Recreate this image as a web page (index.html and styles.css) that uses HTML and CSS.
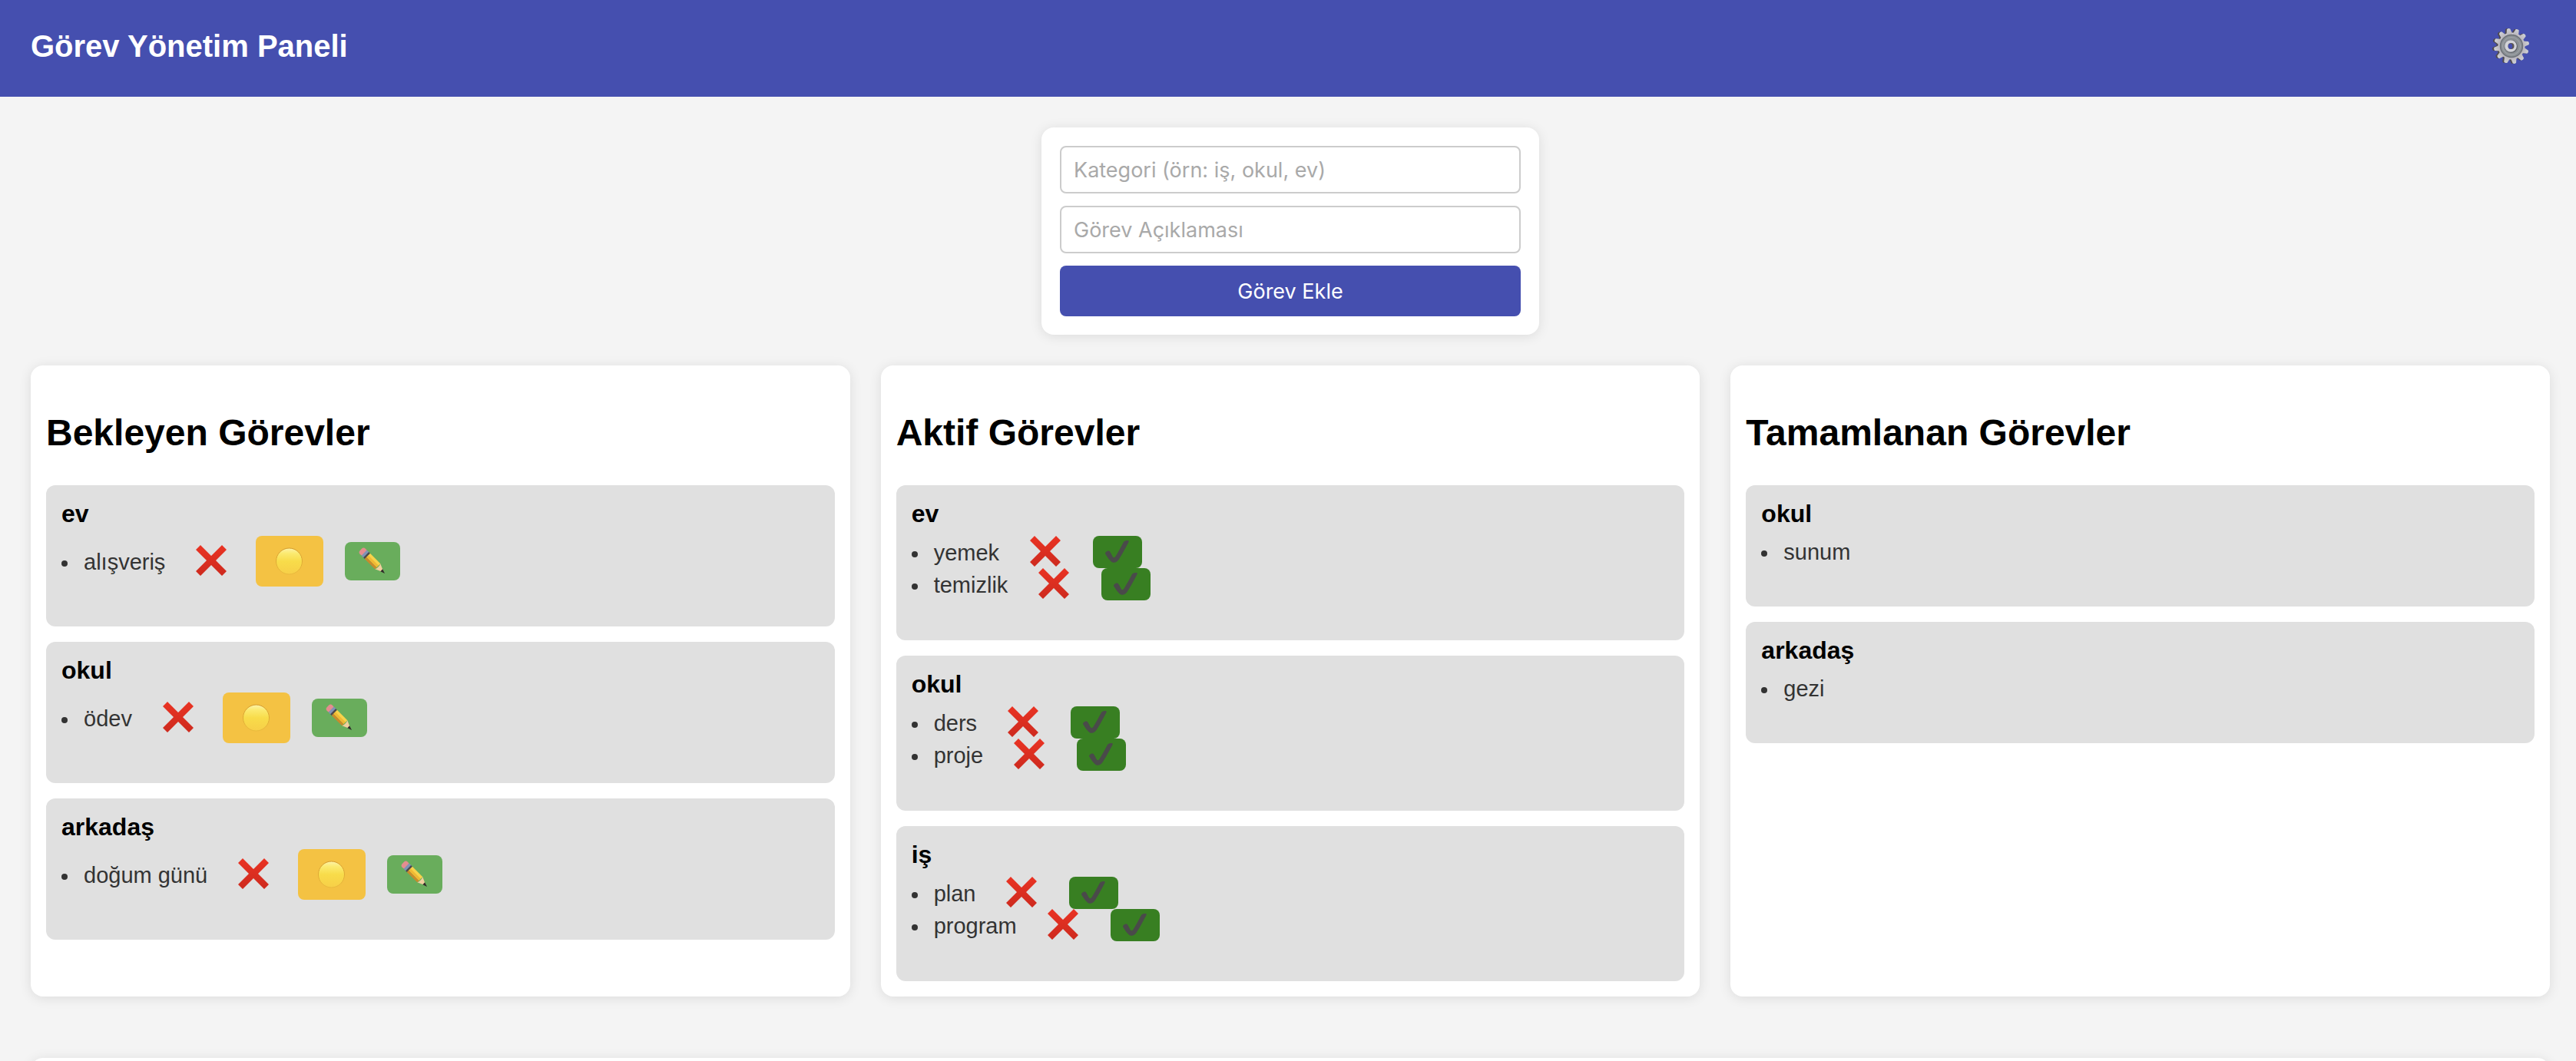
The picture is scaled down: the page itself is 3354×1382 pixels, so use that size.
FILE: index.html
```html
<!DOCTYPE html>
<html lang="tr">
<head>
<meta charset="utf-8">
<title>Görev Yönetim Paneli</title>
<link rel="stylesheet" href="styles.css">
</head>
<body>
<svg class="defs" aria-hidden="true">
  <defs>
    <linearGradient id="red" x1="0" y1="0" x2="0" y2="1"><stop offset="0" stop-color="#ea3323"/><stop offset="1" stop-color="#cd2a1e"/></linearGradient>
    <linearGradient id="sun" x1="0" y1="0" x2="0" y2="1"><stop offset="0" stop-color="#fdf3a8"/><stop offset=".2" stop-color="#fbea70"/><stop offset=".5" stop-color="#f8dc4a"/><stop offset="1" stop-color="#f7cf48"/></linearGradient>
    <linearGradient id="rim" x1="0" y1="0" x2="0" y2="1"><stop offset="0" stop-color="#d39a2c"/><stop offset="1" stop-color="#e9b93c"/></linearGradient>
    <linearGradient id="steel" x1="0" y1="0" x2="0" y2="1"><stop offset="0" stop-color="#cfd1d6"/><stop offset="1" stop-color="#b9b6bd"/></linearGradient>
    <symbol id="cross" viewBox="0 0 40 40"><path fill="url(#red)" d="M6 0 20 14 34 0 40 6 26 20 40 34 34 40 20 26 6 40 0 34 14 20 0 6z"/></symbol>
    <symbol id="circle" viewBox="0 0 36 36"><circle cx="17.500" cy="18" r="17" fill="url(#sun)" stroke="url(#rim)" stroke-width="1"/></symbol>
    <symbol id="check" viewBox="0 0 32 30"><path fill="#4a4a4a" d="M0 17c0-2 3-4 5-3.500 2 1 3.500 6 5.500 8.500 1.500 1 3-1 4-3 3-5 7-12 9.500-17C25 .5 27 0 29.500 0c1.500 0 1.500 1 1 2-3 6-9 17-13 23-2 3-5 4.500-8 3.500C6 27 1 19 0 17z"/></symbol>
    <symbol id="pencil" viewBox="0 0 36 36"><g transform="translate(5 5) rotate(45)"><rect x="-3" y="-5" width="8" height="10" rx="3.500" fill="#e58d8f"/><rect x="3" y="-5" width="5" height="10" fill="#7f93b5"/><rect x="6.500" y="-5" width="3" height="10" fill="#4b4a4d"/><path fill="#f8d24b" d="M9 -5h19v4H9z"/><path fill="#f0b833" d="M9 -1.500h19v3.500H9z"/><path fill="#c98a2b" d="M9 2h19v3H9z"/><path fill="#f1cf9f" d="M28-5 39 0 28 5c1.500-3 1.500-7 0-10z"/><path fill="#2f2b29" d="m35-2 6 2-6 2z"/></g></symbol>
  </defs>
</svg>

<header class="topbar">
  <h1 class="topbar-title">Görev Yönetim Paneli</h1>
  <button class="icon-button" type="button" aria-label="Ayarlar">
    <svg class="gear" viewBox="-24 -24 48 48">
      <defs><path id="tooth" d="M-4-15-2.200-22.500Q0-24 2.200-22.500L4-15z"/>
      <g id="cog"><circle r="17.500"/><use href="#tooth" transform="rotate(-10)"/><use href="#tooth" transform="rotate(20)"/><use href="#tooth" transform="rotate(50)"/><use href="#tooth" transform="rotate(80)"/><use href="#tooth" transform="rotate(110)"/><use href="#tooth" transform="rotate(140)"/><use href="#tooth" transform="rotate(170)"/><use href="#tooth" transform="rotate(200)"/><use href="#tooth" transform="rotate(230)"/><use href="#tooth" transform="rotate(260)"/><use href="#tooth" transform="rotate(290)"/><use href="#tooth" transform="rotate(320)"/></g></defs>
      <use href="#cog" x="-1" y="0" fill="#4f4a4c"/>
      <use href="#cog" x="1" y="0" fill="url(#steel)"/>
      <circle cx="1" r="14.500" fill="#8b9095" stroke="#6d7278" stroke-width="1.500"/>
      <circle cx="1" r="11.500" fill="none" stroke="#a3a8ac" stroke-width="1"/>
      <circle cx=".5" cy=".5" r="8.500" fill="#5e6268"/>
      <circle cx="0" r="7.800" fill="#d2d3d8"/>
      <circle cx=".5" r="4" fill="#5a5552"/>
      <ellipse cx="-.5" cy=".3" rx="2.700" ry="3.500" fill="#454faf"/>
    </svg>
  </button>
</header>

<main class="page">
  <form class="task-form">
    <input class="field" type="text" aria-label="Kategori" placeholder="Kategori (örn: iş, okul, ev)">
    <input class="field" type="text" aria-label="Görev Açıklaması" placeholder="Görev Açıklaması">
    <button class="submit" type="button">Görev Ekle</button>
  </form>

  <div class="board">
    <section class="column">
      <h2 class="column-title">Bekleyen Görevler</h2>
      <article class="group">
        <h3 class="group-title">ev</h3>
        <ul class="tasks">
          <li class="task"><span class="task-name">alışveriş</span>
            <button class="delete" type="button" aria-label="Sil"><svg class="cross"><use href="#cross"/></svg></button>
            <button class="start" type="button" aria-label="Başlat"><svg class="glyph"><use href="#circle"/></svg></button>
            <button class="edit" type="button" aria-label="Düzenle"><svg class="glyph"><use href="#pencil"/></svg></button></li>
        </ul>
      </article>
      <article class="group">
        <h3 class="group-title">okul</h3>
        <ul class="tasks">
          <li class="task"><span class="task-name">ödev</span>
            <button class="delete" type="button" aria-label="Sil"><svg class="cross"><use href="#cross"/></svg></button>
            <button class="start" type="button" aria-label="Başlat"><svg class="glyph"><use href="#circle"/></svg></button>
            <button class="edit" type="button" aria-label="Düzenle"><svg class="glyph"><use href="#pencil"/></svg></button></li>
        </ul>
      </article>
      <article class="group">
        <h3 class="group-title">arkadaş</h3>
        <ul class="tasks">
          <li class="task"><span class="task-name">doğum günü</span>
            <button class="delete" type="button" aria-label="Sil"><svg class="cross"><use href="#cross"/></svg></button>
            <button class="start" type="button" aria-label="Başlat"><svg class="glyph"><use href="#circle"/></svg></button>
            <button class="edit" type="button" aria-label="Düzenle"><svg class="glyph"><use href="#pencil"/></svg></button></li>
        </ul>
      </article>
    </section>

    <section class="column">
      <h2 class="column-title">Aktif Görevler</h2>
      <article class="group">
        <h3 class="group-title">ev</h3>
        <ul class="tasks">
          <li class="task"><span class="task-name">yemek</span>
            <button class="delete" type="button" aria-label="Sil"><svg class="cross"><use href="#cross"/></svg></button>
            <button class="finish" type="button" aria-label="Tamamla"><svg class="tick"><use href="#check"/></svg></button></li>
          <li class="task"><span class="task-name">temizlik</span>
            <button class="delete" type="button" aria-label="Sil"><svg class="cross"><use href="#cross"/></svg></button>
            <button class="finish" type="button" aria-label="Tamamla"><svg class="tick"><use href="#check"/></svg></button></li>
        </ul>
      </article>
      <article class="group">
        <h3 class="group-title">okul</h3>
        <ul class="tasks">
          <li class="task"><span class="task-name">ders</span>
            <button class="delete" type="button" aria-label="Sil"><svg class="cross"><use href="#cross"/></svg></button>
            <button class="finish" type="button" aria-label="Tamamla"><svg class="tick"><use href="#check"/></svg></button></li>
          <li class="task"><span class="task-name">proje</span>
            <button class="delete" type="button" aria-label="Sil"><svg class="cross"><use href="#cross"/></svg></button>
            <button class="finish" type="button" aria-label="Tamamla"><svg class="tick"><use href="#check"/></svg></button></li>
        </ul>
      </article>
      <article class="group">
        <h3 class="group-title">iş</h3>
        <ul class="tasks">
          <li class="task"><span class="task-name">plan</span>
            <button class="delete" type="button" aria-label="Sil"><svg class="cross"><use href="#cross"/></svg></button>
            <button class="finish" type="button" aria-label="Tamamla"><svg class="tick"><use href="#check"/></svg></button></li>
          <li class="task"><span class="task-name">program</span>
            <button class="delete" type="button" aria-label="Sil"><svg class="cross"><use href="#cross"/></svg></button>
            <button class="finish" type="button" aria-label="Tamamla"><svg class="tick"><use href="#check"/></svg></button></li>
        </ul>
      </article>
    </section>

    <section class="column">
      <h2 class="column-title">Tamamlanan Görevler</h2>
      <article class="group">
        <h3 class="group-title">okul</h3>
        <ul class="tasks"><li class="task"><span class="task-name">sunum</span></li></ul>
      </article>
      <article class="group">
        <h3 class="group-title">arkadaş</h3>
        <ul class="tasks"><li class="task"><span class="task-name">gezi</span></li></ul>
      </article>
    </section>
  </div>

  <section class="panel"></section>
</main>
</body>
</html>
```
FILE: styles.css
```css
* { box-sizing: border-box; }

body {
  margin: 0;
  height: 100vh;
  overflow: hidden;
  background: #f4f4f4;
  color: #000;
  font-family: "Liberation Sans", Arial, sans-serif;
  font-size: 29px;
}

h1, h2, h3, ul { margin: 0; padding: 0; }

button {
  display: flex;
  align-items: center;
  justify-content: center;
  padding: 0;
  border: 0;
  border-radius: 8px;
  background: none;
}

svg { display: block; }

.defs { position: absolute; width: 0; height: 0; }

.topbar {
  display: flex;
  align-items: center;
  justify-content: space-between;
  padding: 36px 61px 42px 40px;
  background: #454faf;
  color: #fff;
}

.topbar-title { font-size: 40px; line-height: 46px; }

.gear { width: 48px; height: 48px; }

.page { padding: 40px 34px 40px 40px; }

.task-form {
  display: flex;
  flex-direction: column;
  gap: 16px;
  width: 648px;
  margin: 0 auto 40px;
  padding: 24px;
  border-radius: 16px;
  background: #fff;
  box-shadow: 0 2px 16px rgba(0, 0, 0, 0.1);
}

.field, .submit {
  border-radius: 8px;
  font-family: Inter, "Liberation Sans", sans-serif;
  font-size: 27px;
}

.field {
  height: 62px;
  padding: 0 16px;
  border: 2px solid #ccc;
  background: #fff;
}

.field::placeholder { color: #a9a9a9; opacity: 1; }

.submit { height: 66px; background: #454faf; color: #fff; }

.board { display: grid; grid-template-columns: repeat(3, 1fr); gap: 40px; }

.column, .panel {
  padding: 20px;
  border-radius: 16px;
  background: #fff;
  box-shadow: 0 2px 16px rgba(0, 0, 0, 0.1);
}

.panel { min-height: 200px; margin-top: 80px; }

.column-title { margin: 40px 0; font-size: 48px; line-height: 56px; }

.group {
  padding: 20px 20px 52px;
  border-radius: 12px;
  background: #e0e0e0;
}

.group + .group { margin-top: 20px; }

.group-title { margin-bottom: 12px; font-size: 32px; line-height: 34px; }

.tasks { list-style: none; }

.task { display: flex; align-items: center; color: #333; }

.task::before {
  content: "";
  width: 8px;
  height: 8px;
  margin: 5px 21px 0 0;
  border-radius: 50%;
  background: #333;
}

.task-name { padding-top: 2px; line-height: 38px; }

.delete { margin: 0 38px 2px 40px; }
.cross { width: 40px; height: 40px; }

.start { width: 88px; height: 66px; background: #f4c243; }
.edit { width: 72px; height: 50px; margin-left: 28px; background: #69ad5c; }
.glyph { width: 36px; height: 36px; }

.finish { width: 64px; height: 42px; margin-left: 4px; background: #387f22; }
.tick { width: 32px; height: 30px; }
```
